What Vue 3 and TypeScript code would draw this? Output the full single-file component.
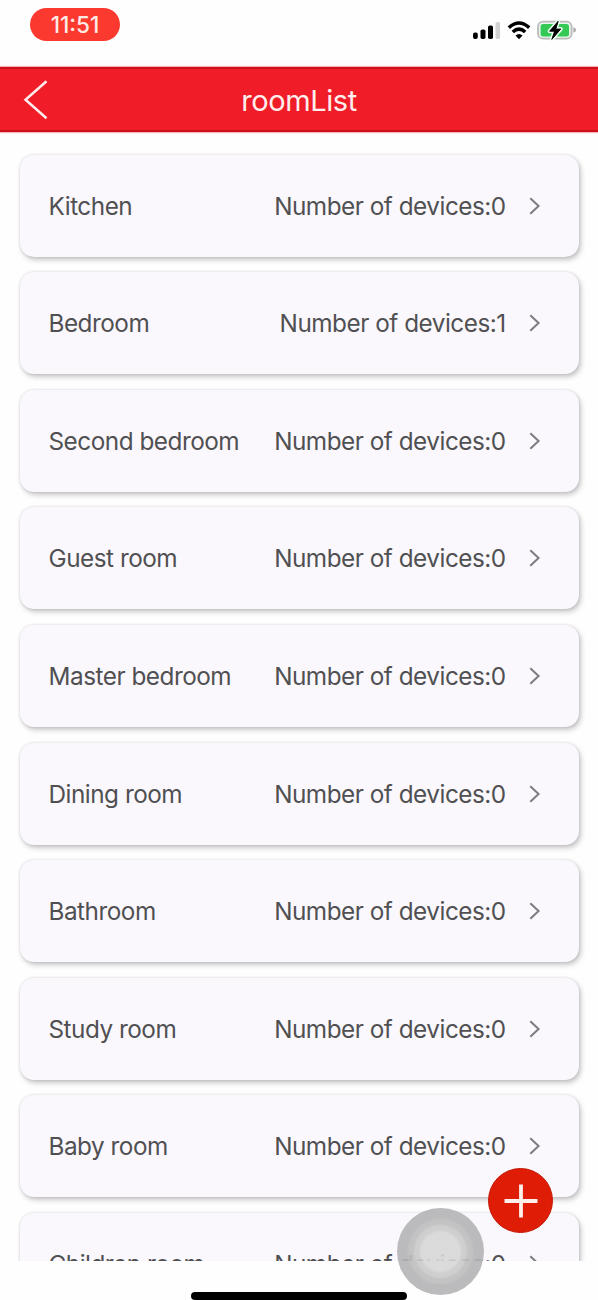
<script setup lang="ts">
interface Room {
  name: string
  devices: number
}

const rooms: Room[] = [
  { name: 'Kitchen', devices: 0 },
  { name: 'Bedroom', devices: 1 },
  { name: 'Second bedroom', devices: 0 },
  { name: 'Guest room', devices: 0 },
  { name: 'Master bedroom', devices: 0 },
  { name: 'Dining room', devices: 0 },
  { name: 'Bathroom', devices: 0 },
  { name: 'Study room', devices: 0 },
  { name: 'Baby room', devices: 0 },
  { name: 'Children room', devices: 0 },
]
</script>

<template>
  <div class="screen">
    <div class="status">
      <span class="clock">11:51</span>
      <svg class="indicators" width="106" height="24" viewBox="0 0 106 24">
        <rect x="3" y="14.5" width="4.8" height="6.5" rx="2" fill="#000" />
        <rect x="10.5" y="11.5" width="5" height="9.5" rx="1.8" fill="#000" />
        <rect x="18" y="7.5" width="5" height="13.5" rx="1.8" fill="#000" />
        <rect x="25.5" y="4" width="4.6" height="17" rx="1.8" fill="#d2d2d2" />
        <g fill="none" stroke="#000" stroke-width="3.5">
          <path d="M38.8 9.6Q49 .4 59.2 9.6" />
          <path d="M42.8 14Q49 8.2 55.2 14" />
        </g>
        <path d="M45.5 17.4Q49 14.4 52.5 17.4L49 21.2Z" fill="#000" />
        <rect x="68" y="3.7" width="33.6" height="17" rx="5" fill="#e9f6ec" stroke="#bababa" stroke-width="1.8" />
        <rect x="70.6" y="6" width="28.4" height="12.4" rx="2.5" fill="#34c855" />
        <path d="M103.4 9.2Q106 10 106 12Q106 14 103.4 14.8Z" fill="#aaa" />
        <path d="M88.2 3.2L79.6 13.2H84.6L81.8 21.4L90.8 11H85.8Z" fill="#000" stroke="#eaffef" stroke-width="4" stroke-linejoin="round" paint-order="stroke" />
        <path d="M88.2 3.2L79.6 13.2H84.6L81.8 21.4L90.8 11H85.8Z" fill="#000" stroke="#000" stroke-width=".8" />
      </svg>
    </div>

    <header class="bar">
      <svg class="back" width="26" height="42" viewBox="0 0 26 42">
        <path d="M23.5 2.2L2.5 20.7L23.5 39.2" fill="none" stroke="#ffecec" stroke-width="2.5" />
      </svg>
      <h1 class="title">roomList</h1>
    </header>

    <main class="list">
      <div v-for="room in rooms" :key="room.name" class="card">
        <span class="name">{{ room.name }}</span>
        <span class="count">Number of devices:{{ room.devices }}</span>
        <svg class="chevron" width="12" height="20" viewBox="0 0 12 20">
          <path d="M1.3 2.2L9.6 10L1.3 17.8" fill="none" stroke="#7c7b80" stroke-width="2" />
        </svg>
      </div>
    </main>

    <div class="home"></div>

    <button class="add" aria-label="Add room">
      <svg width="34" height="34" viewBox="0 0 34 34">
        <path d="M17 .5V33.5M.5 17H33.5" stroke="#fff0ec" stroke-width="3.8" />
      </svg>
    </button>
    <div class="touch"></div>
  </div>
</template>

<style>
body {
  background: #fefefe;
}
</style>

<style scoped>
.screen {
  position: relative;
  display: flex;
  flex-direction: column;
  width: 598px;
  height: 1300px;
  overflow: hidden;
  background: #fefefe;
  font-family: Inter, "Liberation Sans", sans-serif;
}

.status {
  display: flex;
  justify-content: space-between;
  align-items: flex-start;
  box-sizing: border-box;
  height: 67px;
  padding: 8px 22px 0 30px;
}

.clock {
  width: 90px;
  height: 33px;
  border-radius: 17px;
  background: #fb392f;
  color: #ffe9e5;
  font-size: 22.5px;
  font-weight: 500;
  line-height: 34px;
  text-align: center;
}

.indicators {
  margin-top: 10px;
}

.bar {
  display: grid;
  grid-template-columns: 60px 1fr 60px;
  align-items: center;
  box-sizing: border-box;
  flex: none;
  height: 65px;
  border-top: 2px solid #c9111c;
  border-bottom: 2px solid #c9111c;
  background: #f01c28;
  box-shadow: 0 0 1px 1px #f6b3b8;
}

.back {
  margin-left: 23px;
}

.title {
  margin: 0;
  padding-top: 2px;
  color: #ffeeee;
  font-size: 29px;
  font-weight: 400;
  letter-spacing: -0.4px;
  line-height: 40px;
  text-align: center;
}

.list {
  display: flex;
  flex-direction: column;
  gap: 15.6px;
  box-sizing: border-box;
  flex: none;
  height: 1129px;
  padding: 22.6px 19px 0 20px;
  overflow: hidden;
}

.card {
  display: flex;
  align-items: center;
  box-sizing: border-box;
  flex: none;
  height: 102px;
  padding: 0 38px 0 28.5px;
  border-radius: 14px;
  background: #faf8fc;
  box-shadow: 2px 3px 5px rgba(50, 45, 55, 0.26), 0 0 3px rgba(50, 45, 55, 0.16);
  color: #505053;
  font-size: 24.3px;
  letter-spacing: -0.48px;
  line-height: 32px;
  white-space: nowrap;
}

.name {
  flex: 1;
}

.count {
  margin-right: 23.3px;
}

.home {
  align-self: center;
  width: 216px;
  height: 8px;
  margin-top: 31px;
  border-radius: 4px;
  background: #000;
}

.add {
  position: absolute;
  top: 1168px;
  left: 488px;
  display: grid;
  place-items: center;
  width: 65px;
  height: 65px;
  padding: 0;
  border: 1px solid #c41a08;
  border-radius: 50%;
  background: #df1c05;
}

.touch {
  position: absolute;
  top: 1208px;
  left: 397px;
  width: 87px;
  height: 87px;
  border-radius: 50%;
  background: radial-gradient(circle closest-side, rgba(216, 215, 216, 0.9) 0 19px, rgba(203, 202, 203, 0.9) 22px 25px, rgba(190, 189, 190, 0.9) 28px 31px, rgba(180, 179, 181, 0.9) 34px);
}
</style>
